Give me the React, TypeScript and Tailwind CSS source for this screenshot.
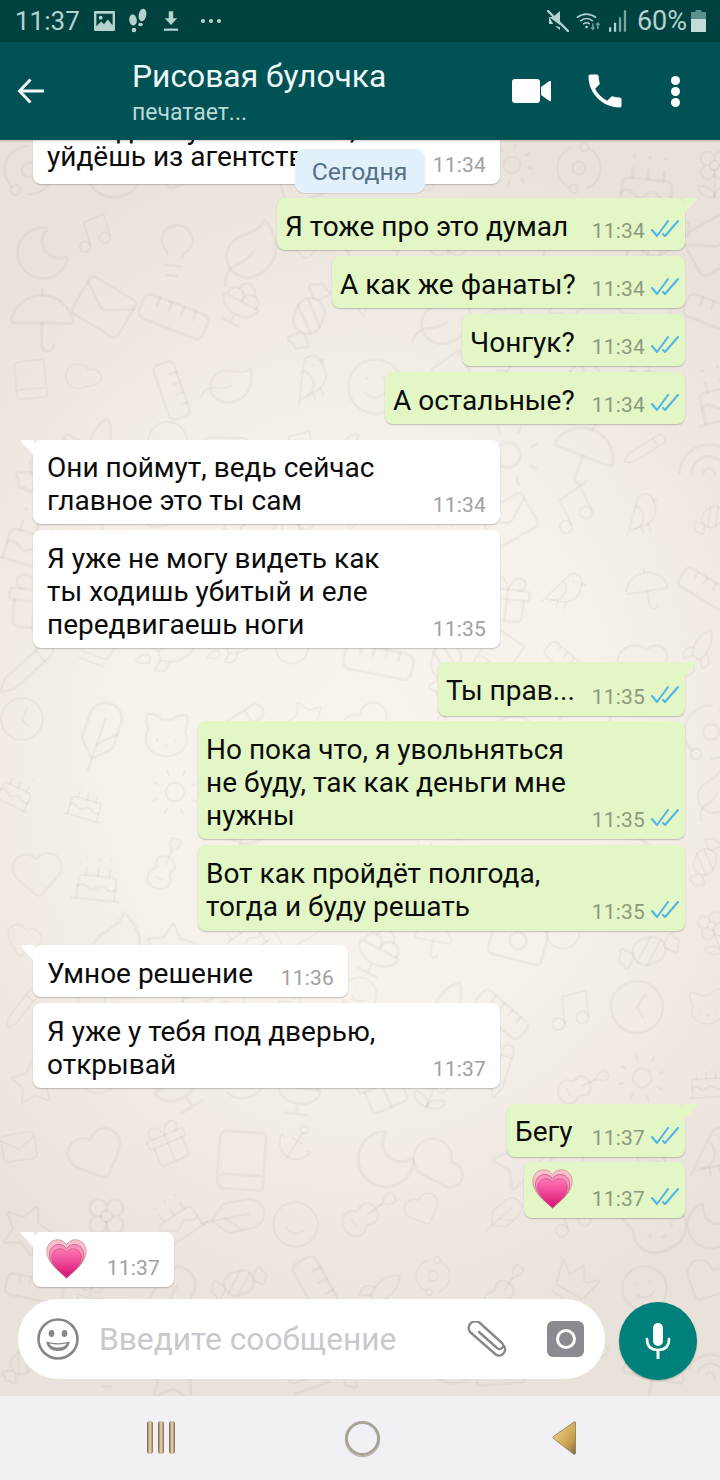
import React from "react";
import {
  Star, Heart, Cloud, Lightbulb, Moon, Crown, Mail, Rainbow, Pencil, Music, Sun, Cake, Gift, Smile,
  Leaf, Flower2, Umbrella, Anchor, Rocket, Feather, Camera, Ruler, Candy, IceCream2, Orbit, Guitar, Bird, Cat, Clock, Book,
} from "lucide-react";

type Msg = {
  side: "l" | "r";
  box: string;
  gap: string;
  pad?: string;
  tail?: boolean;
  lines?: string[];
  heart?: boolean;
  time: string;
};

const msgs: Msg[] = [
  { side: "l", box: "w-[467px] h-[84px]", gap: "", pad: "pt-[13px] [&>div:first-child]:-mb-[6px]", lines: ["Если дела у тебя плохи,", "уйдёшь из агентства"], time: "11:34" },
  { side: "r", box: "w-[408px] h-[52px]", gap: "mt-[14px]", pad: "pt-[12px]", tail: true, lines: ["Я тоже про это думал"], time: "11:34" },
  { side: "r", box: "w-[353px] h-[52px]", gap: "mt-[6px]", pad: "pt-[12px]", lines: ["А как же фанаты?"], time: "11:34" },
  { side: "r", box: "w-[223px] h-[52px]", gap: "mt-[6px]", pad: "pt-[12px]", lines: ["Чонгук?"], time: "11:34" },
  { side: "r", box: "w-[300px] h-[52px]", gap: "mt-[6px]", pad: "pt-[12px]", lines: ["А остальные?"], time: "11:34" },
  { side: "l", box: "w-[467px] h-[84px]", gap: "mt-[16px]", pad: "pt-[11px]", tail: true, lines: ["Они поймут, ведь сейчас", "главное это ты сам"], time: "11:34" },
  { side: "l", box: "w-[467px] h-[118px]", gap: "mt-[6px]", pad: "pt-[12px]", lines: ["Я уже не могу видеть как", "ты ходишь убитый и еле", "передвигаешь ноги"], time: "11:35" },
  { side: "r", box: "w-[247px] h-[54px]", gap: "mt-[14px]", pad: "pt-[12px]", tail: true, lines: ["Ты прав..."], time: "11:35" },
  { side: "r", box: "w-[487px] h-[118px]", gap: "mt-[5px]", pad: "pt-[12px]", lines: ["Но пока что, я увольняться", "не буду, так как деньги мне", "нужны"], time: "11:35" },
  { side: "r", box: "w-[487px] h-[86px]", gap: "mt-[6px]", pad: "pt-[12px]", lines: ["Вот как пройдёт полгода,", "тогда и буду решать"], time: "11:35" },
  { side: "l", box: "w-[315px] h-[52px]", gap: "mt-[14px]", pad: "pt-[12px]", tail: true, lines: ["Умное решение"], time: "11:36" },
  { side: "l", box: "w-[467px] h-[85px]", gap: "mt-[6px]", pad: "pt-[12px]", lines: ["Я уже у тебя под дверью,", "открывай"], time: "11:37" },
  { side: "r", box: "w-[178px] h-[53px]", gap: "mt-[16px]", pad: "pt-[11px]", tail: true, lines: ["Бегу"], time: "11:37" },
  { side: "r", box: "w-[161px] h-[56px]", gap: "mt-[5px]", heart: true, time: "11:37" },
  { side: "l", box: "w-[141px] h-[55px]", gap: "mt-[14px]", tail: true, heart: true, time: "11:37" },
];

function Ticks() {
  return (
    <svg width="28" height="18" viewBox="0 0 28 18" fill="none" stroke="#4fb4e6" strokeWidth="2" strokeLinecap="round" strokeLinejoin="round" className="mb-[5px] ml-[6px]">
      <path d="M1 10l5 6L17 1" />
      <path d="M12 14l2 2L27 1" />
    </svg>
  );
}

function GrowingHeart({ id }: { id: string }) {
  const p = "M12 22.5C8 18.5 1.5 14.5 1.5 8 1.5 4.5 4.2 2 7.2 2 9.2 2 11 3 12 4.6 13 3 14.8 2 16.8 2c3 0 5.700 2.500 5.700 6 0 6.500-6.500 10.500-10.500 14.500z";
  return (
    <svg width="45" height="45" viewBox="0 0 24 24" className="ml-[-3px] shrink-0">
      <defs>
        <linearGradient id={id} x1="0" y1="0" x2="0" y2="1">
          <stop offset="0" stopColor="#ff78b4" />
          <stop offset="1" stopColor="#d80f74" />
        </linearGradient>
      </defs>
      <path d={p} fill="#f9c0cc" stroke="#d09c98" strokeWidth="0.5" />
      <g transform="translate(1.6 2.8) scale(.87)">
        <path d={p} fill="#f993bc" stroke="#c05a86" strokeWidth="0.5" />
      </g>
      <g transform="translate(3 5.3) scale(.75)">
        <path d={p} fill={`url(#${id})`} stroke="#b8447a" strokeWidth="0.4" />
      </g>
    </svg>
  );
}

function Bubble({ m, idx }: { m: Msg; idx: number }) {
  const right = m.side === "r";
  return (
    <div className={`flex shrink-0 ${right ? "justify-end pr-[35px]" : "justify-start pl-[33px]"} ${m.gap}`}>
      <div
        className={`relative flex justify-between rounded-[8px] shadow-[0_1px_1.5px_rgba(0,0,0,0.22)] ${m.box} ${
          right ? "bg-[#e2f7c5] pl-[8px] pr-[6px]" : "bg-white pl-[14px] pr-[14px]"
        }`}
      >
        {m.tail &&
          (right ? (
            <svg width="14" height="16" viewBox="0 0 14 16" className="absolute right-[-13px] top-0">
              <path d="M0 0H12Q14 0 13 1.500L0 16z" fill="#e2f7c5" />
            </svg>
          ) : (
            <svg width="14" height="16" viewBox="0 0 14 16" className="absolute left-[-13px] top-0">
              <path d="M14 0H2Q0 0 1 1.500L14 16z" fill="#ffffff" />
            </svg>
          ))}
        {m.heart ? (
          <div className={`pt-[4px] ${right ? "pl-[1px]" : ""}`}>
            <GrowingHeart id={`h${idx}`} />
          </div>
        ) : (
          <div className={`${m.pad} text-[28px] leading-[33px] text-[#0b0b0b] whitespace-nowrap`}>
            {m.lines!.map((l) => (
              <div key={l}>{l}</div>
            ))}
          </div>
        )}
        <div className={`flex items-end pb-[7px] ${right ? "text-[#8b9a7f]" : "text-[#a0a0a0]"}`}>
          <span className="text-[21px] leading-[24px] tracking-[0.2px]">{m.time}</span>
          {right && <Ticks />}
        </div>
      </div>
    </div>
  );
}

const set = [Star, Heart, Cloud, Lightbulb, Moon, Crown, Mail, Rainbow, Pencil, Music, Sun, Cake, Gift, Smile, Leaf, Flower2, Umbrella, Anchor, Rocket, Feather, Camera, Ruler, Candy, IceCream2, Orbit, Guitar, Bird, Cat, Clock, Book];
const doodles: { I: React.ComponentType<any>; x: number; y: number; s: number; r: number }[] = [];
{
  let n = 7;
  for (let row = 0; row < 18; row++) {
    for (let col = 0; col < 11; col++) {
      n = (n * 31 + 17) % 1009;
      doodles.push({
        I: set[n % set.length],
        x: col * 68 - 6 + (n % 19),
        y: row * 70 - 6 + ((n >> 2) % 17),
        s: 40 + (n % 36),
        r: (n % 70) - 35,
      });
    }
  }
}

function Wallpaper() {
  return (
    <svg className="absolute inset-0 h-full w-full" viewBox="0 0 720 1256" fill="none">
      {doodles.map(({ I, x, y, s, r }, i) => (
        <g key={i} transform={`translate(${x} ${y}) rotate(${r} ${s / 2} ${s / 2})`}>
          <I width={s} height={s} strokeWidth={1} stroke="#6b5f50" strokeOpacity="0.06" />
        </g>
      ))}
    </svg>
  );
}

function StatusBar() {
  return (
    <div className="flex h-[42px] shrink-0 items-center justify-between bg-[#00423f] pl-[15px] pr-[14px] text-[#b5d2cf]">
      <div className="flex items-center">
        <span className="text-[26px] leading-none">11:37</span>
        <svg width="21" height="20" viewBox="0 0 22 21" className="ml-[14px]">
          <path fillRule="evenodd" d="M1 0h20a1 1 0 0 1 1 1v19a1 1 0 0 1-1 1H1a1 1 0 0 1-1-1V1a1 1 0 0 1 1-1zM2.500 3v13l5-5 3 3 4-5 5 6V3z" fill="#b5d2cf" />
          <circle cx="7" cy="7" r="2" fill="#b5d2cf" />
        </svg>
        <svg width="22" height="26" viewBox="0 0 22 26" fill="#b5d2cf" className="ml-[12px]">
          <ellipse cx="15.500" cy="7" rx="3.800" ry="6.300" transform="rotate(12 15.500 7)" />
          <ellipse cx="13.500" cy="16.500" rx="2.300" ry="1.800" />
          <ellipse cx="6" cy="12" rx="3.800" ry="5.500" transform="rotate(-8 6 12)" />
          <ellipse cx="7" cy="22" rx="2.300" ry="2.200" />
        </svg>
        <svg width="16" height="24" viewBox="0 0 18 24" fill="#b5d2cf" className="ml-[14px]">
          <path d="M6.500 1h5v8h4.500L9 16.500 2 9h4.500z" />
          <rect x="1" y="20.500" width="16" height="2.500" />
        </svg>
        <div className="ml-[22px] flex gap-[4px]">
          <span className="h-[4px] w-[4px] rounded-full bg-[#b5d2cf]" />
          <span className="h-[4px] w-[4px] rounded-full bg-[#b5d2cf]" />
          <span className="h-[4px] w-[4px] rounded-full bg-[#b5d2cf]" />
        </div>
      </div>
      <div className="flex items-center">
        <svg width="22" height="22" viewBox="0 0 22 22" fill="#b5d2cf">
          <path d="M2 7h4l7-6v14zM2 7v7h4z" />
          <path d="M6 14h-4V7z" />
          <path d="M13 17v3l-5-4z" />
          <path d="M1 1l20 20" stroke="#b5d2cf" strokeWidth="2.400" strokeLinecap="round" />
        </svg>
        <svg width="32" height="19" viewBox="0 0 38 22" fill="none" stroke="#b5d2cf" strokeWidth="1.800" className="ml-[7px]">
          <path d="M1 6.500Q12-2 24 6.500" />
          <path d="M5 10.500Q12.500 4.500 20 10.500" />
          <path d="M8.500 14Q12.500 11 16.500 14" />
          <circle cx="12.500" cy="17.500" r="1.600" fill="#b5d2cf" stroke="none" />
          <path d="M20 13v7M18 18l2 2 2-2" stroke="#6f9c99" />
          <path d="M26 20v-7M24 15l2-2 2 2" stroke="#6f9c99" />
        </svg>
        <svg width="18" height="22" viewBox="0 0 20 24" className="ml-[1px]">
          <rect x="0" y="19" width="2.500" height="5" fill="#b5d2cf" />
          <rect x="5.500" y="14" width="2.500" height="10" fill="#b5d2cf" />
          <rect x="11" y="8" width="2.500" height="16" fill="#7aa5a2" />
          <rect x="16.500" y="0" width="2.500" height="24" fill="#7aa5a2" />
        </svg>
        <span className="ml-[10px] text-[27px] leading-none">60%</span>
        <svg width="15" height="22" viewBox="0 0 15 22" className="ml-[4px]">
          <path d="M4.500 0h6v2H14a1 1 0 0 1 1 1v19H0V3a1 1 0 0 1 1-1h3.500z" fill="#5f8f8c" />
          <rect x="0" y="9" width="15" height="13" fill="#c3dcd9" />
        </svg>
      </div>
    </div>
  );
}

function Header() {
  return (
    <div className="relative z-10 flex h-[98px] shrink-0 items-center bg-[#005255] shadow-[0_1px_2px_rgba(0,0,0,0.2)]">
      <svg width="28" height="26" viewBox="0 0 28 26" fill="none" stroke="#f2fafa" strokeWidth="3" className="ml-[17px]">
        <path d="M27 13H3" />
        <path d="M13.500 1.500L2.500 13l11 11.500" />
      </svg>
      <div className="ml-[87px] flex w-[380px] flex-col">
        <span className="text-[31.8px] leading-[38px] text-[#eef8f8]">Рисовая булочка</span>
        <span className="mt-[5px] text-[23px] leading-[26px] text-[#b9dad8]">печатает...</span>
      </div>
      <svg width="39" height="24" viewBox="0 0 39 24" fill="#fff">
        <rect x="0" y="0" width="28" height="24" rx="3" />
        <path d="M29 8l8.500-6q1.500-.5 1.500 1v18q0 1.500-1.500 1L29 16z" />
      </svg>
      <svg width="44" height="44" viewBox="0 0 24 24" fill="#fff" className="ml-[32px]">
        <path d="M6.620 10.790c1.440 2.830 3.760 5.140 6.590 6.590l2.200-2.200c.27-.27.67-.36 1.020-.24 1.120.37 2.330.57 3.570.57.55 0 1 .45 1 1V20c0 .55-.45 1-1 1-9.390 0-17-7.610-17-17 0-.55.45-1 1-1h3.500c.55 0 1 .45 1 1 0 1.250.2 2.450.57 3.570.11.35.03.74-.25 1.020l-2.200 2.200z" />
      </svg>
      <div className="ml-[44px] flex flex-col gap-[2px]">
        <span className="h-[9px] w-[9px] rounded-full bg-white" />
        <span className="h-[9px] w-[9px] rounded-full bg-white" />
        <span className="h-[9px] w-[9px] rounded-full bg-white" />
      </div>
    </div>
  );
}

function InputBar() {
  return (
    <div className="relative flex shrink-0 pb-[16px] pl-[18px] pt-[12px]">
      <div className="flex h-[80px] w-[587px] items-center rounded-full bg-white pl-[19px]">
        <svg width="42" height="42" viewBox="0 0 42 42" fill="none">
          <circle cx="21" cy="21" r="19.500" stroke="#85868b" strokeWidth="2.600" />
          <ellipse cx="14.500" cy="15.500" rx="2.800" ry="3.400" fill="#85868b" />
          <ellipse cx="27.500" cy="15.500" rx="2.800" ry="3.400" fill="#85868b" />
          <path d="M9 23.500q12 3.500 24 0-2 9.500-12 9.500T9 23.500z" fill="#85868b" />
          <path d="M12.500 25.500q8.500 2 17 0-1.500 4-8.500 4t-8.500-4z" fill="#fff" />
        </svg>
        <span className="ml-[20px] w-[368px] pt-[1px] text-[31.7px] leading-none text-[#c9c9cd]">Введите сообщение</span>
        <svg width="40" height="36" viewBox="0 0 40 36" fill="none" stroke="#88898e" strokeWidth="2.400" strokeLinecap="round" strokeLinejoin="round">
          <path d="M12 11L30 27A3.500 3.500 0 0 0 35 22L14 3A6.500 6.500 0 0 0 3 11L27 32A6 6 0 0 0 37 25" />
        </svg>
        <div className="ml-[40px] flex h-[36px] w-[37px] items-center justify-center rounded-[6px] bg-[#8a8b91]">
          <div className="h-[20px] w-[20px] rounded-full border-[3.500px] border-white" />
        </div>
      </div>
      <div className="ml-[14px] mt-[3px] flex h-[78px] w-[78px] items-center justify-center rounded-full bg-[#00807b] shadow-[0_1px_2px_rgba(0,0,0,0.25)]">
        <svg width="26" height="36" viewBox="0 0 26 36" fill="none" stroke="#fff">
          <rect x="8" y="0" width="10" height="23" rx="5" fill="#fff" stroke="none" />
          <path d="M2 16q0 11 11 11t11-11" strokeWidth="2.600" strokeLinecap="round" />
          <path d="M13 27v9" strokeWidth="3" />
        </svg>
      </div>
    </div>
  );
}

function NavBar() {
  return (
    <div className="flex h-[84px] shrink-0 items-center bg-[#f1f0f5]">
      <svg width="30" height="36" viewBox="0 0 30 36" className="ml-[146px]">
        <defs>
          <linearGradient id="gold" x1="0" y1="0" x2="1" y2="0">
            <stop offset="0" stopColor="#6f5e46" />
            <stop offset=".5" stopColor="#f1dcae" />
            <stop offset="1" stopColor="#7d6a4e" />
          </linearGradient>
          <linearGradient id="tri" x1="0" y1="0" x2="1" y2="1">
            <stop offset="0" stopColor="#f3d98e" />
            <stop offset=".7" stopColor="#c79f4d" />
            <stop offset="1" stopColor="#7f6a45" />
          </linearGradient>
        </defs>
        <rect x="1" y="1" width="6" height="33" rx="3" fill="url(#gold)" />
        <rect x="12" y="1" width="6" height="33" rx="3" fill="url(#gold)" />
        <rect x="23" y="1" width="6" height="33" rx="3" fill="url(#gold)" />
      </svg>
      <div className="ml-[169px] h-[35px] w-[35px] rounded-full border-[3px] border-[#a8a396] shadow-[0_1px_1px_rgba(0,0,0,0.3)]" />
      <svg width="24" height="36" viewBox="0 0 24 36" className="ml-[172px]">
        <path d="M22 2q1.500-1 1.500 1v30q0 2-2 1L2 19q-2-1.500 0-3z" fill="url(#tri)" stroke="#8b7a58" strokeWidth="0.8" />
      </svg>
    </div>
  );
}

export default function App() {
  return (
    <div className="flex h-[1480px] w-[720px] flex-col overflow-hidden bg-white font-['Roboto',sans-serif]">
      <StatusBar />
      <Header />
      <div className="relative flex min-h-0 flex-1 flex-col justify-end overflow-hidden bg-[radial-gradient(ellipse_75%_50%_at_50%_48%,#f9f3ee_0%,#f7f1ec_45%,#e9e2da_100%)]">
        <Wallpaper />
        <div className="relative flex flex-col">
          {msgs.map((m, i) => (
            <Bubble key={i} m={m} idx={i} />
          ))}
        </div>
        <InputBar />
        <div className="absolute left-[295px] top-[9px] flex h-[44px] w-[130px] items-center justify-center rounded-[9px] bg-[#e1f0fb] pr-[1px] pt-[3px] text-[24.8px] leading-none text-[#56708a] shadow-[0_1px_1px_rgba(0,0,0,0.1)]">
          Сегодня
        </div>
      </div>
      <NavBar />
    </div>
  );
}
